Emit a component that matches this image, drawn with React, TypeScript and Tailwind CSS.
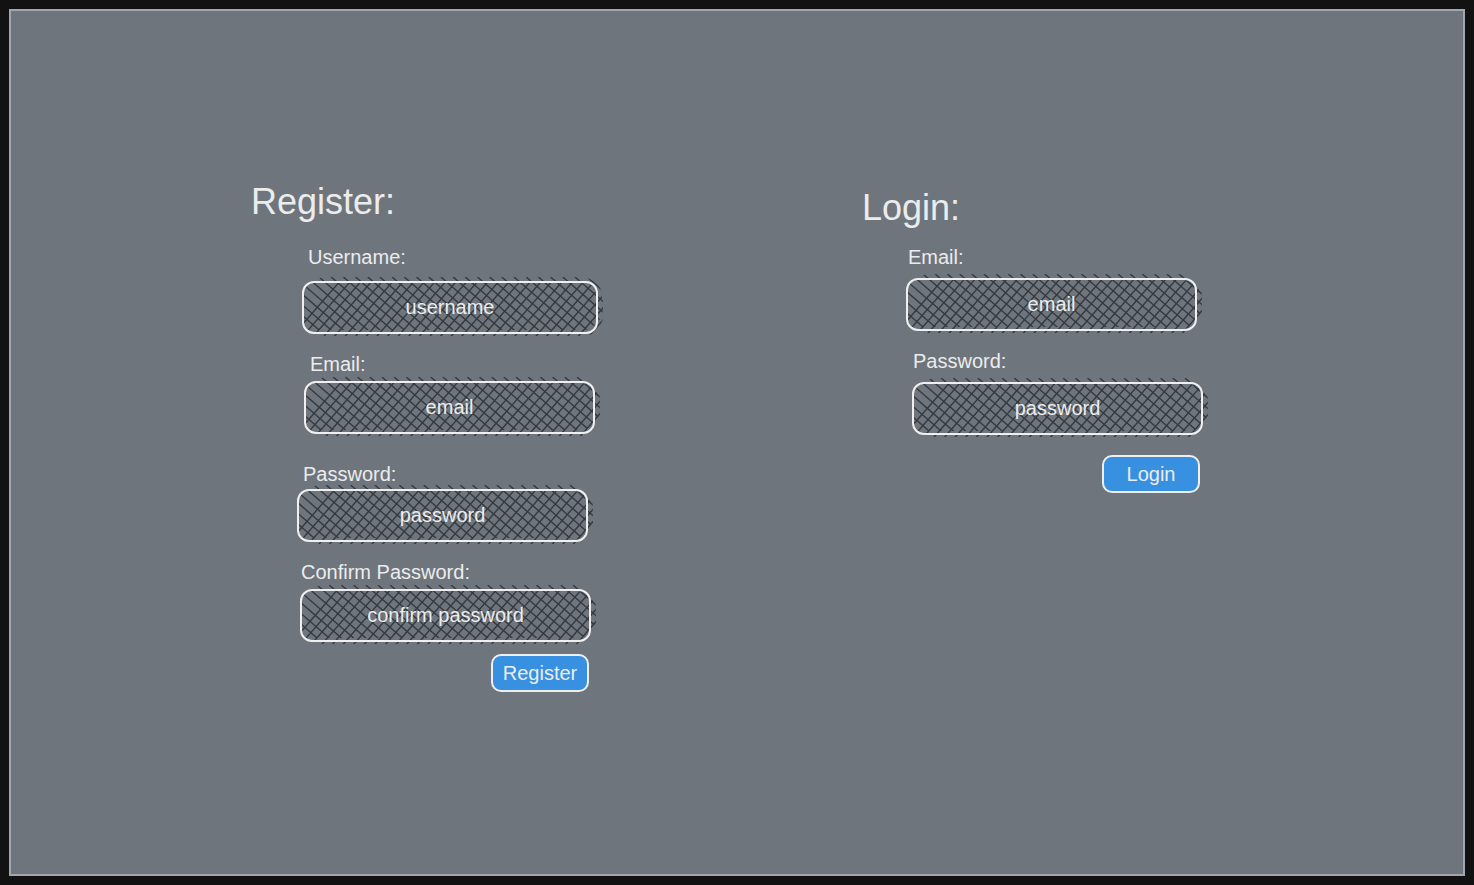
import { useId } from "react";

type FieldProps = {
  label: string;
  placeholder: string;
  type?: string;
  className?: string;
  labelClass?: string;
  wide?: boolean;
};

// Two families of parallel strokes, 8px apart: one falls at 41 degrees, the other rises at 49.
const FALLING = Array.from({ length: 32 }, (_, i) => {
  const x = 17 + (i - 6) * 12.19;
  return `M${x.toFixed(1)} -4l73.6 64`;
}).join("");

const RISING = Array.from({ length: 36 }, (_, i) => {
  const x = 23 + (i - 3) * 10.6;
  return `M${x.toFixed(1)} 54l-5 5.8M${x.toFixed(1)} 54l52.2 -60`;
}).join("");

function Hatch() {
  const id = useId();
  const falling = `${id}-falling`;
  const rising = `${id}-rising`;
  return (
    <svg
      aria-hidden="true"
      className="pointer-events-none absolute inset-0 h-full w-full overflow-visible text-[#343a40]"
      fill="none"
      stroke="currentColor"
      strokeWidth="1.4"
    >
      <defs>
        <clipPath id={falling}>
          <rect x="2" y="-4" width="101%" height="53" rx="22" />
          <rect x="2" y="2" width="98%" height="47" rx="10" />
        </clipPath>
        <clipPath id={rising}>
          <rect x="2" y="2" width="101%" height="53" rx="20" />
          <rect x="2" y="2" width="98%" height="49" rx="10" />
        </clipPath>
      </defs>
      <g clipPath={`url(#${falling})`}>
        <path d={FALLING} />
      </g>
      <g clipPath={`url(#${rising})`}>
        <path d={RISING} />
      </g>
    </svg>
  );
}

function Field({ label, placeholder, type = "text", className = "", labelClass = "", wide = false }: FieldProps) {
  const id = useId();
  return (
    <div className={`flex flex-col ${className}`}>
      <label htmlFor={id} className={`text-xl leading-6 ${labelClass}`}>
        {label}
      </label>
      <div className={`relative h-[53px] w-full ${wide ? "max-w-[296px]" : "max-w-[291px]"}`}>
        <Hatch />
        <input
          id={id}
          type={type}
          placeholder={placeholder}
          className="relative block h-full w-full rounded-xl border-2 border-[#efefef] bg-transparent px-3 text-center text-xl text-[#ececec] outline-none placeholder:text-[#ececec] placeholder:opacity-100"
        />
      </div>
    </div>
  );
}

function SubmitButton({ children, className }: { children: string; className: string }) {
  return (
    <button
      type="submit"
      className={`flex h-[38px] w-[98px] items-center justify-center rounded-[10px] border-2 border-[#efefef] bg-[#3791e0] text-xl leading-6 ${className}`}
    >
      {children}
    </button>
  );
}

export default function App() {
  return (
    <div className="flex min-h-screen bg-[#121212] p-[9px] font-['Liberation_Sans',Arial,sans-serif] text-[#ececec]">
      <main className="grid flex-1 grid-cols-2 items-start border-2 border-[#a0a7af] bg-[#6e757c] pt-[171px]">
        <form className="pl-60" onSubmit={(e) => e.preventDefault()}>
          <h1 className="text-4xl leading-10">Register:</h1>
          <div className="flex max-w-[350px] flex-col pl-[46px]">
            <Field
              label="Username:"
              placeholder="username"
              className="ml-[5px] mt-[23px] gap-3"
              labelClass="pl-1.5"
              wide
            />
            <Field label="Email:" placeholder="email" className="ml-[7px] mt-[18px] gap-[5px]" labelClass="pl-1.5" />
            <Field
              label="Password:"
              placeholder="password"
              type="password"
              className="mt-7 gap-[3px]"
              labelClass="pl-1.5"
            />
            <Field
              label="Confirm Password:"
              placeholder="confirm password"
              type="password"
              className="ml-[3px] mt-[18px] gap-[5px]"
              labelClass="pl-px"
            />
            <SubmitButton className="mr-3 mt-3 self-end">Register</SubmitButton>
          </div>
        </form>

        <form className="pl-[125px] pt-1.5" onSubmit={(e) => e.preventDefault()}>
          <h1 className="text-4xl leading-10">Login:</h1>
          <div className="flex max-w-[350px] flex-col pl-11">
            <Field label="Email:" placeholder="email" className="mt-[17px] gap-[9px]" labelClass="pl-0.5" />
            <Field
              label="Password:"
              placeholder="password"
              type="password"
              className="ml-1.5 mt-[18px] gap-[9px]"
              labelClass="pl-px"
            />
            <SubmitButton className="mr-3 mt-5 self-end">Login</SubmitButton>
          </div>
        </form>
      </main>
    </div>
  );
}
